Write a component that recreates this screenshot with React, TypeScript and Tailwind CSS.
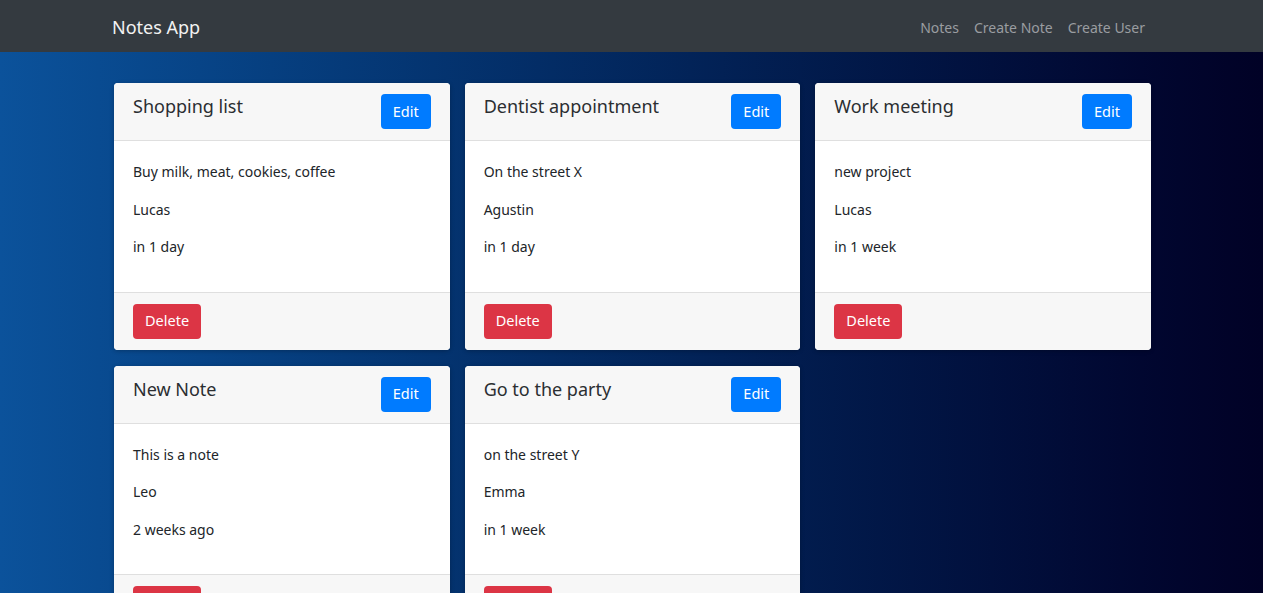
import React from "react";

interface NoteData {
  title: string;
  content: string;
  author: string;
  date: string;
}

const notes: NoteData[] = [
  { title: "Shopping list", content: "Buy milk, meat, cookies, coffee", author: "Lucas", date: "in 1 day" },
  { title: "Dentist appointment", content: "On the street X", author: "Agustin", date: "in 1 day" },
  { title: "Work meeting", content: "new project", author: "Lucas", date: "in 1 week" },
  { title: "New Note", content: "This is a note", author: "Leo", date: "2 weeks ago" },
  { title: "Go to the party", content: "on the street Y", author: "Emma", date: "in 1 week" },
];

const NoteCard = ({ title, content, author, date }: NoteData) => {
  return (
    <div className="bg-white rounded-[4px] overflow-hidden shadow-[0_1px_4px_rgba(0,0,0,0.25)]">
      <div className="flex items-start justify-between bg-[#f7f7f7] border-b border-[#dfdfdf] px-[19px] py-[11px]">
        <h4 className="text-[18px] leading-[24px] text-[#2b2e31]">{title}</h4>
        <button className="h-[35px] px-[12px] rounded-[4px] bg-[#007bff] text-white text-[14.5px]">
          Edit
        </button>
      </div>
      <div className="px-[19px] pt-[20px] pb-[18px] text-[14px] leading-[21px] text-[#212529]">
        <p className="mb-[16.5px]">{content}</p>
        <p className="mb-[16.5px]">{author}</p>
        <p className="mb-[16.5px]">{date}</p>
      </div>
      <div className="bg-[#f7f7f7] border-t border-[#dfdfdf] px-[19px] py-[11px]">
        <button className="h-[35px] px-[12px] rounded-[4px] bg-[#dc3545] text-white text-[14.5px]">
          Delete
        </button>
      </div>
    </div>
  );
};

export default function App() {
  return (
    <div
      className="min-h-screen bg-linear-to-r from-[#0b529b] to-[#010226]"
      style={{ fontFamily: '"Noto Sans", "Open Sans", sans-serif' }}
    >
      <nav className="h-[52px] bg-[#343a40] flex items-center justify-between pl-[112px] pr-[118px] pt-[2px]">
        <span className="text-[18px] text-[#f2f2f2]">Notes App</span>
        <div className="flex gap-[15px] text-[14px] text-[#9a9da0]">
          <span>Notes</span>
          <span>Create Note</span>
          <span>Create User</span>
        </div>
      </nav>
      <div className="w-[1037px] ml-[114px] pt-[31px] pb-[20px] grid grid-cols-3 gap-x-[15px] gap-y-[16px]">
        {notes.map((note, index) => (
          <NoteCard {...note} key={index} />
        ))}
      </div>
    </div>
  );
}
